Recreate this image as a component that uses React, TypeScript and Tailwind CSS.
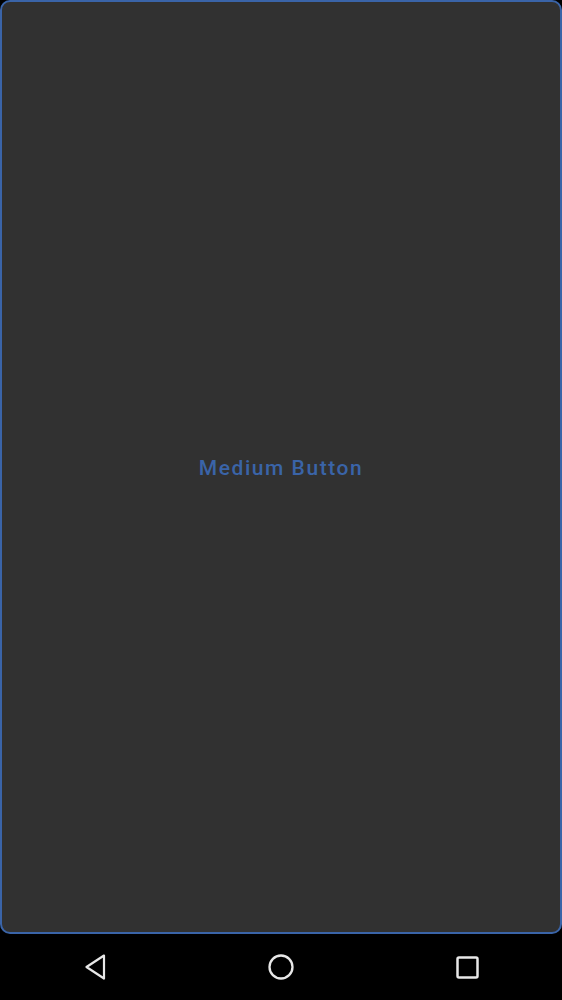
import React from "react";

export default function App() {
  return (
    <div className="w-[562px] h-[1000px] bg-black flex flex-col" style={{ fontFamily: "Roboto, 'Noto Sans', sans-serif" }}>
      <div className="h-[934px] bg-[#313131] border-2 border-[#3a64a8] rounded-[10px] flex items-center justify-center">
        <span className="text-[21px] font-medium tracking-[1.55px] text-[#3a64a8] pt-[4px]">Medium Button</span>
      </div>
      <div className="flex-1 grid grid-cols-3 items-center justify-items-center px-[2px]">
        <svg width="22" height="26" viewBox="0 0 22 26">
          <path d="M20 1.5 L2.5 13 L20 24.5 Z" fill="none" stroke="#e8e8e8" strokeWidth="2.2" strokeLinejoin="round" />
        </svg>
        <svg width="26" height="26" viewBox="0 0 26 26">
          <circle cx="13" cy="13" r="11.5" fill="none" stroke="#e8e8e8" strokeWidth="2.3" />
        </svg>
        <svg width="23" height="23" viewBox="0 0 23 23">
          <rect x="1.5" y="1.5" width="20" height="20" rx="1.5" fill="none" stroke="#e8e8e8" strokeWidth="2.5" />
        </svg>
      </div>
    </div>
  );
}
